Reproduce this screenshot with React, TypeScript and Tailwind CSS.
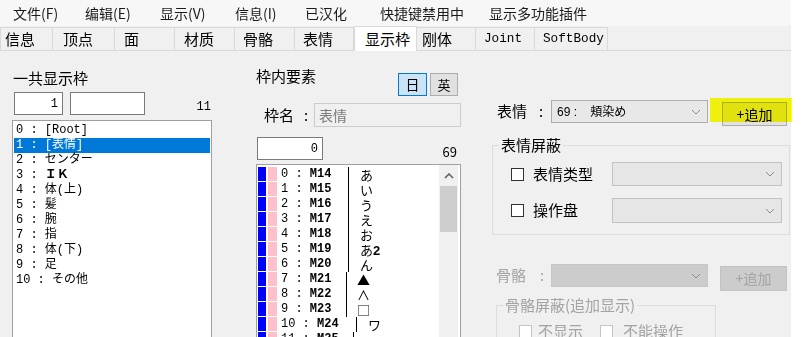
import React from "react";

const ui = "font-['Noto_Sans_CJK_SC','Noto_Sans_CJK_JP',sans-serif]";
const mono = "font-['Liberation_Mono','Noto_Sans_CJK_JP',monospace]";

const menus = [
  { label: "文件(F)", cls: "w-[72px]" },
  { label: "编辑(E)", cls: "w-[75px]" },
  { label: "显示(V)", cls: "w-[75px]" },
  { label: "信息(I)", cls: "w-[70px]" },
  { label: "已汉化", cls: "w-[75px]" },
  { label: "快捷键禁用中", cls: "w-[109px]" },
  { label: "显示多功能插件", cls: "" },
];

const tabs = [
  { label: "信息", cls: "w-[53px] pl-[4px] border-l" },
  { label: "顶点", cls: "w-[62px] pl-[10px]" },
  { label: "面", cls: "w-[60px] pl-[9px]" },
  { label: "材质", cls: "w-[60px] pl-[9px]" },
  { label: "骨骼", cls: "w-[60px] pl-[8px]" },
  { label: "表情", cls: "w-[59px] pl-[8px]" },
  { label: "显示枠", cls: "w-[63px] pl-[10px]", active: true },
  { label: "刚体", cls: "w-[59px] pl-[5px]" },
  { label: "Joint", cls: "w-[59px] pl-[8px]", mono: true },
  { label: "SoftBody", cls: "w-[73px] pl-[8px]", mono: true },
];

const frames = ["[Root]", "[表情]", "センター", "ＩＫ", "体(上)", "髪", "腕", "指", "体(下)", "足", "その他"];

// index, morph name, display text, text column width, gap after the bar
const morphs = [
  { n: "0", m: "M14", t: "あ", w: "w-[71px]", g: "pl-[11px]" },
  { n: "1", m: "M15", t: "い", w: "w-[71px]", g: "pl-[11px]" },
  { n: "2", m: "M16", t: "う", w: "w-[71px]", g: "pl-[11px]" },
  { n: "3", m: "M17", t: "え", w: "w-[71px]", g: "pl-[11px]" },
  { n: "4", m: "M18", t: "お", w: "w-[71px]", g: "pl-[11px]" },
  { n: "5", m: "M19", t: "あ", x: "2", w: "w-[71px]", g: "pl-[11px]" },
  { n: "6", m: "M20", t: "ん", w: "w-[71px]", g: "pl-[11px]" },
  { n: "7", m: "M21", t: "▲", w: "w-[69px]", g: "pl-[10px]" },
  { n: "8", m: "M22", t: "∧", w: "w-[69px]", g: "pl-[10px]" },
  { n: "9", m: "M23", t: "□", w: "w-[69px]", g: "pl-[10px]" },
  { n: "10", m: "M24", t: "ワ", w: "w-[79px]", g: "pl-[11px]" },
  { n: "11", m: "M25", t: "ω", w: "w-[76px]", g: "pl-[11px]" },
];

function Chevron({ up = false }: { up?: boolean }) {
  return (
    <svg width="10" height="6" viewBox="0 0 10 6" className="shrink-0">
      <path d={up ? "M1 5 L5 1 L9 5" : "M1 1 L5 5 L9 1"} fill="none" stroke={up ? "#606060" : "#8a8a8a"} strokeWidth={up ? 1.6 : 1} />
    </svg>
  );
}

function Check({ off = false }: { off?: boolean }) {
  return <span className={`block h-[13px] w-[13px] shrink-0 border bg-white ${off ? "border-[#c4c4c4]" : "border-[#333333]"}`} />;
}

function Select({ cls, text }: { cls: string; text?: string }) {
  return (
    <div className={`flex items-center justify-between pl-[5px] pr-[6px] ${cls}`}>
      <span className="whitespace-pre text-[12px] font-['Liberation_Sans','Noto_Sans_CJK_JP',sans-serif]">{text}</span>
      <Chevron />
    </div>
  );
}

function MenuBar() {
  return (
    <div className="flex h-[26px] shrink-0 items-center bg-[#f7f7f7] pl-[13px] text-[14px] text-[#1a1a1a]">
      {menus.map((m) => (
        <span key={m.label} className={`shrink-0 ${m.cls}`}>
          {m.label}
        </span>
      ))}
    </div>
  );
}

function TabStrip() {
  return (
    <div className="flex h-[25px] shrink-0 items-end border-b border-[#d9d9d9]">
      {tabs.map((t) =>
        t.active ? (
          <div key={t.label} className={`relative z-10 -mb-[1px] flex h-[25px] items-center border-x border-t border-[#d9d9d9] bg-white text-[15px] ${t.cls}`}>
            {t.label}
          </div>
        ) : (
          <div key={t.label} className={`flex h-[23px] items-center border-r border-t border-[#d9d9d9] ${t.mono ? `${mono} text-[12.7px]` : "text-[15px]"} ${t.cls}`}>
            {t.label}
          </div>
        )
      )}
    </div>
  );
}

function FrameList() {
  return (
    <div className="flex w-[200px] shrink-0 flex-col">
      <div className="mt-[17px] h-[20px] pl-[1px] text-[15px] leading-[20px]">一共显示枠</div>
      <div className="mt-[4px] flex items-end">
        <div className={`ml-[2px] flex h-[23px] w-[49px] items-center justify-end border border-[#7a7a7a] bg-white pr-[4px] text-[12px] ${mono}`}>1</div>
        <div className="ml-[7px] h-[23px] w-[75px] border border-[#7a7a7a] bg-white" />
        <span className={`ml-auto pr-[1px] text-[12px] leading-[16px] ${mono}`}>11</span>
      </div>
      <div className="mt-[5px] h-[300px] border border-[#a0a0a0] bg-white p-[1px] pt-[2px]">
        {frames.map((f, i) => (
          <div
            key={f}
            className={`h-[15px] whitespace-pre pl-[2px] text-[12px] leading-[15px] ${mono} ${i === 1 ? "bg-[#0078d7] text-white" : ""}`}
          >
            {`${i} : `}
            <span className={i === 3 ? "font-bold" : ""}>{f}</span>
          </div>
        ))}
      </div>
    </div>
  );
}

function FrameItems() {
  return (
    <div className="ml-[44px] flex w-[205px] shrink-0 flex-col">
      <div className="mt-[15px] flex justify-between">
        <span className="h-[20px] text-[15px] leading-[20px]">枠内要素</span>
        <div className="mr-[3px] mt-[7px] flex gap-[3px] text-[14px]">
          <span className="flex h-[23px] w-[29px] items-center justify-center border border-[#0078d7] bg-[#cce4f7]">日</span>
          <span className="flex h-[23px] w-[28px] items-center justify-center border border-[#adadad] bg-[#e1e1e1] text-[13px]">英</span>
        </div>
      </div>
      <div className="mt-[7px] flex items-center">
        <span className="pl-[8px] text-[15px]">枠名</span>
        <span className="ml-[10px] text-[15px]">:</span>
        <div className="ml-auto flex h-[24px] w-[147px] items-center border border-[#cccccc] bg-[#f0f0f0] pl-[4px] text-[14px] text-[#7a7a7a]">表情</div>
      </div>
      <div className="mt-[10px] flex items-end">
        <div className={`ml-[1px] flex h-[23px] w-[66px] items-center justify-end border border-[#7a7a7a] bg-white pr-[4px] text-[12px] ${mono}`}>0</div>
        <span className="ml-auto pr-[4px] text-[13px] leading-[16px]">69</span>
      </div>
      <div className="mt-[4px] flex h-[200px] border border-[#a0a0a0] bg-white">
        <div className="flex-1 pt-[2px]">
          {morphs.map((r) => (
            <div key={r.n} className="flex h-[15px] items-start">
              <span className="ml-[1px] h-[14px] w-[8px] shrink-0 bg-[#0000ff]" />
              <span className="ml-[2px] h-[14px] w-[9px] shrink-0 bg-[#ffc0cb]" />
              <span className={`h-[15px] shrink-0 whitespace-pre pl-[4px] text-[12px] leading-[15px] ${mono} ${r.w}`}>
                {`${r.n} : `}
                <span className="font-bold">{r.m}</span>
              </span>
              <span className={`h-[15px] border-l border-black text-[13px] leading-[15px] font-['Noto_Sans_CJK_JP',sans-serif] ${r.g}`}>
                {r.t}
                {r.x && <b className="font-['Liberation_Sans',sans-serif]">{r.x}</b>}
              </span>
            </div>
          ))}
        </div>
        <div className="mr-[2px] flex w-[19px] shrink-0 flex-col bg-[#f0f0f0]">
          <div className="flex h-[21px] items-center justify-center">
            <Chevron up />
          </div>
          <div className="mx-[1px] h-[46px] bg-[#cdcdcd]" />
        </div>
      </div>
    </div>
  );
}

function MorphPanel() {
  return (
    <div className="ml-[29px] flex w-[300px] shrink-0 flex-col text-[15px]">
      <div className="mt-[49px] flex items-start">
        <div className="flex h-[23px] w-[61px] items-center pl-[7px]">
          <span>表情</span>
          <span className="ml-[12px]">:</span>
        </div>
        <Select cls="h-[23px] w-[157px] border border-[#adadad] bg-[#e8e8e8]" text="69 :    頬染め" />
        <div className="relative ml-[14px] mt-[2px]">
          <div className="flex h-[24px] w-[65px] items-center justify-center border border-[#adadad] bg-[#e1e1e1] text-[14px]">+追加</div>
          <div className="pointer-events-none absolute -left-[12px] -top-[4px] h-[24px] w-[82px] bg-[#ffff10] mix-blend-multiply" />
        </div>
      </div>

      <fieldset className="ml-[2px] mt-[9px] w-[298px] border border-[#dcdcdc] pb-[11px]">
        <legend className="ml-[6px] px-[2px] text-[15px] leading-[20px]">表情屏蔽</legend>
        <div className="mt-[7px] flex h-[24px] items-center pl-[18px]">
          <Check />
          <span className="ml-[9px]">表情类型</span>
          <Select cls="ml-auto mr-[7px] h-[24px] w-[170px] border border-[#c2c2c2] bg-[#e6e6e6]" />
        </div>
        <div className="mt-[12px] flex h-[25px] items-center pl-[18px]">
          <Check />
          <span className="ml-[9px]">操作盘</span>
          <Select cls="ml-auto mr-[7px] h-[25px] w-[170px] border border-[#c2c2c2] bg-[#e6e6e6]" />
        </div>
      </fieldset>

      <div className="mt-[29px] flex items-start text-[#a3a3a3]">
        <div className="flex h-[23px] w-[61px] items-center pl-[6px]">
          <span>骨骼</span>
          <span className="ml-[14px]">:</span>
        </div>
        <Select cls="h-[23px] w-[157px] border border-[#c6c6c6] bg-[#cccccc]" />
        <div className="ml-[12px] mt-[2px] flex h-[25px] w-[67px] items-center justify-center border border-[#c2c2c2] bg-[#cccccc] text-[14px]">+追加</div>
      </div>

      <fieldset className="ml-[6px] mt-[4px] w-[220px] border border-[#dcdcdc] pb-[10px] text-[#a3a3a3]">
        <legend className="ml-[6px] px-[2px] text-[15px] leading-[20px]">骨骼屏蔽(追加显示)</legend>
        <div className="mt-[9px] flex h-[15px] items-center pl-[22px]">
          <Check off />
          <span className="ml-[6px]">不显示</span>
          <span className="ml-[17px]">
            <Check off />
          </span>
          <span className="ml-[10px]">不能操作</span>
        </div>
      </fieldset>
    </div>
  );
}

export default function App() {
  return (
    <div className={`flex h-[337px] w-[802px] overflow-hidden bg-white text-black ${ui}`}>
      <div className="flex w-[791px] shrink-0 flex-col bg-[#f0f0f0]">
        <MenuBar />
        <TabStrip />
        <div className="flex pl-[12px]">
          <FrameList />
          <FrameItems />
          <MorphPanel />
        </div>
      </div>
    </div>
  );
}
